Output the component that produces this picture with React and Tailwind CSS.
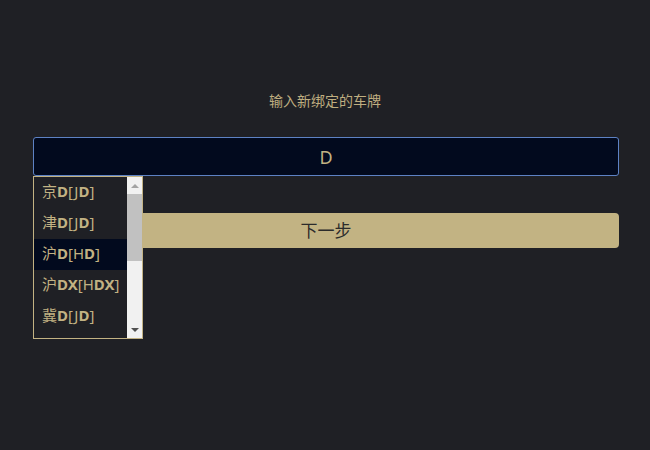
import { useState } from "react";

const plates = [
  { id: "jd1", prov: "京", hit: "D", code: "J", hitCode: "D" },
  { id: "jd2", prov: "津", hit: "D", code: "J", hitCode: "D" },
  { id: "hd", prov: "沪", hit: "D", code: "H", hitCode: "D" },
  { id: "hdx", prov: "沪", hit: "DX", code: "H", hitCode: "DX" },
  { id: "jd3", prov: "冀", hit: "D", code: "J", hitCode: "D" },
];

const font = { fontFamily: '"Noto Sans", "Noto Sans CJK SC", sans-serif' };

const BindPlate = () => {
  const [value, setValue] = useState("D");
  const [active] = useState("hd");

  return (
    <div
      className="min-h-[450px] w-full bg-[#1f2025] px-[33px] pt-[91px]"
      style={font}
    >
      <p className="text-center text-[14px] leading-[20px] text-[#bfae80]">
        输入新绑定的车牌
      </p>

      <div className="relative mt-[26px]">
        <input
          value={value}
          onChange={(e) => setValue(e.target.value)}
          className="block h-[39px] w-[586px] rounded-[3px] border border-[#5d82c4] bg-[#020a1e] text-center text-[18px] text-[#c2b283] outline-none"
        />

        {/* suggestion list */}
        <div className="absolute left-0 top-[39px] z-10 flex h-[163px] w-[110px] border border-[#c2b283] bg-[#1f2025]">
          <ul className="flex-1">
            {plates.map((p) => (
              <li
                key={p.id}
                className={`h-[31px] whitespace-nowrap pl-[8px] text-[15px] leading-[29px] text-[#c2b283] ${
                  p.id === active ? "bg-[#020a1e]" : ""
                }`}
              >
                {p.prov}
                <b>{p.hit}</b>[{p.code}
                <b>{p.hitCode}</b>]
              </li>
            ))}
          </ul>
          <div className="flex w-[15px] shrink-0 flex-col items-center bg-[#f1f1f1]">
            <div className="flex h-[17px] items-center justify-center">
              <div className="h-0 w-0 border-x-[4px] border-b-[4px] border-x-transparent border-b-[#a3a3a3]" />
            </div>
            <div className="h-[67px] w-full bg-[#c1c1c1]" />
            <div className="flex-1" />
            <div className="flex h-[17px] items-center justify-center">
              <div className="h-0 w-0 border-x-[4px] border-t-[4px] border-x-transparent border-t-[#505050]" />
            </div>
          </div>
        </div>
      </div>

      <button className="mt-[37px] block h-[35px] w-[586px] rounded-[4px] bg-[#c2b383] text-[17px] text-[#2b2b2b]">
        下一步
      </button>
    </div>
  );
};

export default function App() {
  return <BindPlate />;
}
